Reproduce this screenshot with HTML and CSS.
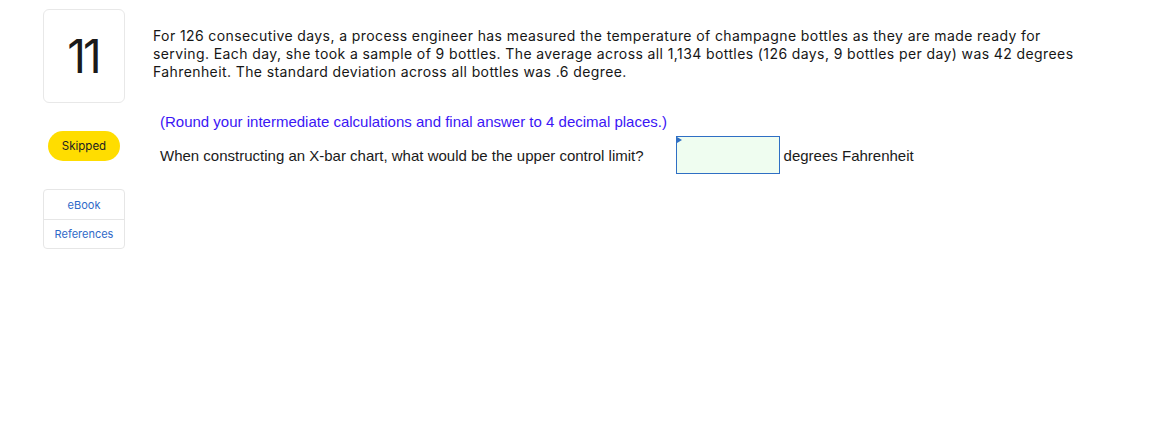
FILE: index.html
```html
<!DOCTYPE html>
<html>
<head>
<meta charset="utf-8">
<link rel="stylesheet" href="styles.css">
</head>
<body>
<div class="page">
  <aside class="side">
    <div class="qnum">11</div>
    <div class="status">Skipped</div>
    <div class="links">
      <div class="link">eBook</div>
      <div class="link">References</div>
    </div>
  </aside>
  <main class="content">
    <p class="prompt">For 126 consecutive days, a process engineer has measured the temperature of champagne bottles as they are made ready for serving. Each day, she took a sample of 9 bottles. The average across all 1,134 bottles (126 days, 9 bottles per day) was 42 degrees Fahrenheit. The standard deviation across all bottles was .6 degree.</p>
    <div class="question">
      <p class="note">(Round your intermediate calculations and final answer to 4 decimal places.)</p>
      <div class="ask">
        <span class="ask-text">When constructing an X-bar chart, what would be the upper control limit?</span>
        <span class="answer"><span class="flag"></span></span>
        <span class="unit">degrees Fahrenheit</span>
      </div>
    </div>
  </main>
</div>
</body>
</html>
```

FILE: styles.css
```css
html, body {
  margin: 0;
  padding: 0;
  background: #ffffff;
}

.page {
  display: flex;
  gap: 28px;
  padding: 9px 0 0 43px;
}

.side {
  width: 82px;
  display: flex;
  flex-direction: column;
  align-items: center;
  font-family: "Inter", "Lato", sans-serif;
}

.qnum {
  box-sizing: border-box;
  width: 82px;
  height: 94px;
  border: 1px solid #e8e8e8;
  border-radius: 6px;
  display: flex;
  align-items: center;
  justify-content: center;
  font-size: 46px;
  color: #1a1a1a;
  letter-spacing: -3px;
  padding-right: 2px;
}

.status {
  margin-top: 28px;
  width: 72px;
  height: 30px;
  border-radius: 15px;
  background: #ffdd00;
  display: flex;
  align-items: center;
  justify-content: center;
  font-size: 11.5px;
  color: #222;
}

.links {
  margin-top: 28px;
  box-sizing: border-box;
  width: 82px;
  border: 1px solid #e6e6e6;
  border-radius: 4px;
}

.link {
  height: 29px;
  display: flex;
  align-items: center;
  justify-content: center;
  font-size: 11px;
  color: #2f6ac8;
}

.link + .link {
  height: 28px;
  border-top: 1px solid #e6e6e6;
}

.content {
  flex: 1;
}

.prompt {
  margin: 18px 0 0 0;
  width: 925px;
  font-family: "Inter", "Lato", sans-serif;
  font-size: 14px;
  letter-spacing: 0.4px;
  line-height: 18px;
  color: #161616;
}

.question {
  padding-left: 7px;
  margin-top: 27px;
  font-family: "Liberation Sans", Arial, sans-serif;
  font-size: 15px;
}

.note {
  margin: 0;
  color: #3b16f5;
  line-height: 18px;
  padding-top: 5px;
}

.ask {
  margin-top: 5px;
  display: flex;
  align-items: center;
  color: #1a1a1a;
}

.ask-text {
  margin-right: 32px;
}

.answer {
  position: relative;
  box-sizing: border-box;
  width: 104px;
  height: 38px;
  border: 1px solid #2f6fc4;
  background: #effdf0;
}

.flag {
  position: absolute;
  top: 0;
  left: 0;
  width: 0;
  height: 0;
  border-top: 3px solid transparent;
  border-bottom: 3px solid transparent;
  border-left: 5px solid #2f6fc4;
}

.unit {
  margin-left: 4px;
}
```
